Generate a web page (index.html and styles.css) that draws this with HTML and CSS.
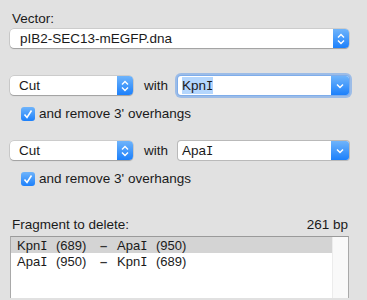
FILE: index.html
```html
<!DOCTYPE html>
<html lang="en">
<head>
  <meta charset="UTF-8" />
  <title>Delete Fragment</title>
  <link rel="stylesheet" href="styles.css">
</head>
<body>
  <div class="panel">
    <div class="label">Vector:</div>
    <div class="popup wide">
      <span class="popup-text">pIB2-SEC13-mEGFP.dna</span>
      <span class="popup-btn">
        <svg width="16" height="20" viewBox="0 0 16 20"><path d="M5 8.5 L8 5.5 L11 8.5 M5 11.5 L8 14.5 L11 11.5" fill="none" stroke="#fff" stroke-width="1.4"/></svg>
      </span>
    </div>

    <div class="cut-row first">
      <div class="popup cut">
        <span class="popup-text">Cut</span>
        <span class="popup-btn">
          <svg width="16" height="20" viewBox="0 0 16 20"><path d="M5 8.5 L8 5.5 L11 8.5 M5 11.5 L8 14.5 L11 11.5" fill="none" stroke="#fff" stroke-width="1.4"/></svg>
        </span>
      </div>
      <span class="with">with</span>
      <div class="combo focused">
        <span class="combo-text"><span class="sel">Kpn<span class="rn">I</span></span></span>
        <span class="combo-btn">
          <svg width="18" height="20" viewBox="0 0 18 20"><path d="M6 8.5 L9 11.5 L12 8.5" fill="none" stroke="#fff" stroke-width="1.5"/></svg>
        </span>
      </div>
    </div>
    <label class="check-row">
      <span class="check">
        <svg width="14" height="14" viewBox="0 0 14 14"><path d="M3.5 7.5 L6 10.5 L10.5 3.5" fill="none" stroke="#fff" stroke-width="1.6"/></svg>
      </span>
      and remove 3' overhangs
    </label>

    <div class="cut-row second">
      <div class="popup cut">
        <span class="popup-text">Cut</span>
        <span class="popup-btn">
          <svg width="16" height="20" viewBox="0 0 16 20"><path d="M5 8.5 L8 5.5 L11 8.5 M5 11.5 L8 14.5 L11 11.5" fill="none" stroke="#fff" stroke-width="1.4"/></svg>
        </span>
      </div>
      <span class="with">with</span>
      <div class="combo">
        <span class="combo-text">Apa<span class="rn">I</span></span>
        <span class="combo-btn">
          <svg width="18" height="20" viewBox="0 0 18 20"><path d="M6 8.5 L9 11.5 L12 8.5" fill="none" stroke="#fff" stroke-width="1.5"/></svg>
        </span>
      </div>
    </div>
    <label class="check-row">
      <span class="check">
        <svg width="14" height="14" viewBox="0 0 14 14"><path d="M3.5 7.5 L6 10.5 L10.5 3.5" fill="none" stroke="#fff" stroke-width="1.6"/></svg>
      </span>
      and remove 3' overhangs
    </label>

    <div class="frag-head">
      <span>Fragment to delete:</span>
      <span>261 bp</span>
    </div>
    <div class="list">
      <div class="rows">
        <div class="row selected">
          <span>Kpn<span class="rn">I</span></span><span>(689)</span><span class="dash">–</span><span>Apa<span class="rn">I</span></span><span>(950)</span>
        </div>
        <div class="row">
          <span>Apa<span class="rn">I</span></span><span>(950)</span><span class="dash">–</span><span>Kpn<span class="rn">I</span></span><span>(689)</span>
        </div>
      </div>
      <div class="track"></div>
    </div>
  </div>
</body>
</html>
```

FILE: styles.css
```css
body {
  margin: 0;
  background-color: #e1e1e1;
  font-family: "Liberation Sans", Arial, sans-serif;
  font-size: 13.5px;
  color: #1a1a1a;
  overflow: hidden;
}
.panel {
  padding: 11px 18px 0 10px;
}
.label {
  line-height: 16px;
  padding-left: 2px;
}
.popup, .combo {
  display: flex;
  align-items: stretch;
  height: 19px;
  background: #fff;
  border-radius: 4px;
  box-shadow: 0 0 0 0.5px rgba(0, 0, 0, 0.18), 0 1px 1px rgba(0, 0, 0, 0.22);
}
.popup.wide {
  margin-top: 2px;
}
.popup-text {
  flex: 1;
  line-height: 19px;
  padding-left: 10px;
  white-space: nowrap;
}
.popup-btn, .combo-btn {
  width: 16px;
  border-radius: 0 4px 4px 0;
  background: linear-gradient(#6fb4fb, #1c80fb);
  display: flex;
  align-items: center;
  justify-content: center;
}
.popup-btn svg {
  display: block;
}
.cut-row {
  display: flex;
  align-items: center;
}
.cut-row.first {
  margin-top: 28px;
}
.cut-row.second {
  margin-top: 19px;
}
.popup.cut {
  width: 123px;
}
.popup.cut .popup-text {
  padding-left: 9px;
}
.with {
  margin-left: 11px;
  margin-right: 10px;
  line-height: 19px;
}
.combo {
  flex: 1;
  border-radius: 3px;
  box-shadow: 0 0 0 1px #b9b9b9;
}
.combo.focused {
  box-shadow: 0 0 0 1px #7fadea, 0 0 0 3px rgba(101, 158, 236, 0.55);
}
.combo-text {
  flex: 1;
  line-height: 19px;
  padding-left: 4px;
}
.combo-btn {
  width: 18px;
  border-radius: 0 3px 3px 0;
}
.sel {
  background: #b4d6fd;
  padding: 1px 0;
}
.rn {
  font-family: "DejaVu Sans Mono", monospace;
  font-size: 12px;
}
.check-row {
  display: flex;
  align-items: center;
  gap: 4px;
  margin-top: 11px;
  padding-left: 11px;
  line-height: 16px;
}
.check {
  width: 14px;
  height: 14px;
  border-radius: 3px;
  background: linear-gradient(#6fb4fb, #1c80fb);
  display: flex;
}
.frag-head {
  display: flex;
  justify-content: space-between;
  margin-top: 30px;
  padding: 0 1px 0 2px;
  line-height: 16px;
}
.list {
  display: flex;
  margin-top: 3px;
  height: 61px;
  background: #fff;
  border: 1px solid #a9a9a9;
  border-bottom: none;
  border-top-color: #9a9a9a;
}
.rows {
  flex: 1;
}
.row {
  display: grid;
  grid-template-columns: 39px 44px 17px 39px auto;
  height: 16px;
  line-height: 17px;
  padding-left: 6px;
  font-size: 13px;
}
.row.selected {
  background: #d4d4d4;
}
.dash {
  font-weight: bold;
  color: #333;
}
.track {
  width: 15px;
  background: #f9f9f9;
  border-left: 1px solid #ececec;
}
```
